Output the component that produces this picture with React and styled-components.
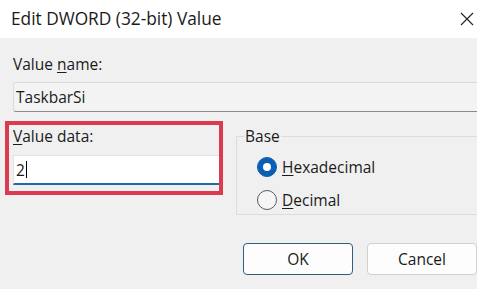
import React from "react";
import styled, { createGlobalStyle } from "styled-components";

const Global = createGlobalStyle`
  html, body { margin: 0; padding: 0; }
  body {
    width: 477px;
    height: 289px;
    overflow: hidden;
    background: #f0f0f0;
    font-family: "Open Sans", "Noto Sans", sans-serif;
    color: #1b1b1b;
  }
  u { text-decoration-thickness: 1px; text-underline-offset: 2px; }
`;

const Window = styled.div`
  width: 477px;
  height: 289px;
  display: flex;
  flex-direction: column;
  overflow: hidden;
`;

const TitleBar = styled.div`
  height: 38px;
  flex: none;
  background: #ffffff;
  display: flex;
  align-items: center;
  justify-content: space-between;
  padding: 0 0 0 11px;
  box-sizing: border-box;
`;

const Title = styled.div`
  font-size: 17.3px;
  color: #1a1a1a;
  padding-bottom: 1px;
`;

const CloseBtn = styled.div`
  width: 20px;
  height: 20px;
  display: flex;
  align-items: center;
  justify-content: center;
`;

const Body = styled.div`
  flex: 1;
  background: #f0f0f0;
  padding: 16px 0 0 13px;
  display: flex;
  flex-direction: column;
`;

const Label = styled.div`
  font-size: 15.5px;
  line-height: 20px;
  height: 20px;
  white-space: nowrap;
`;

const NameBox = styled.div`
  margin-top: 8px;
  height: 30px;
  width: 480px;
  box-sizing: border-box;
  border: 1px solid #dadada;
  border-bottom-color: #8b8b8b;
  background: #f3f3f3;
  border-radius: 3px 0 0 3px;
  display: flex;
  align-items: center;
  padding-left: 2px;
  font-size: 15.5px;
`;

const Row = styled.div`
  margin-top: 9px;
  margin-left: -8px;
  display: flex;
  align-items: flex-start;
`;

const Highlight = styled.div`
  flex: none;
  width: 218px;
  height: 74px;
  box-sizing: border-box;
  border: 4px solid #dc3a4f;
  padding: 1px 0 0 4px;
  display: flex;
  flex-direction: column;
`;

const DataBox = styled.div`
  margin-top: 9px;
  height: 30px;
  box-sizing: border-box;
  background: #ffffff;
  border: 1px solid #e2e2e2;
  border-bottom: 2px solid #1f6aa8;
  border-right: none;
  display: flex;
  align-items: center;
  padding-left: 2px;
  font-size: 15.5px;
`;

const Caret = styled.span`
  display: inline-block;
  width: 1px;
  height: 17px;
  background: #000;
  margin-left: 1px;
`;

const Group = styled.fieldset`
  flex: none;
  margin: 5px 0 0 13px;
  padding: 0 0 0 20px;
  width: 260px;
  height: 89px;
  box-sizing: border-box;
  border: 1px solid #dcdcdc;
  border-right: none;
  border-radius: 0;
  display: flex;
  flex-direction: column;
  gap: 13px;
`;

const Legend = styled.legend`
  font-size: 15.5px;
  padding: 0 1px 0 1px;
  margin-left: -13px;
  line-height: 20px;
`;

const Option = styled.label`
  display: flex;
  align-items: center;
  gap: 5px;
  font-size: 15.5px;
  height: 20px;
  &:first-of-type { margin-top: 11px; }
`;

const Radio = styled.span`
  width: 20px;
  height: 20px;
  box-sizing: border-box;
  border-radius: 50%;
  flex: none;
  display: flex;
  align-items: center;
  justify-content: center;
  background: ${(p) => (p.checked ? "#0a5fb4" : "#f6f6f6")};
  border: 1px solid ${(p) => (p.checked ? "#0a5fb4" : "#5c5c5c")};
  &::after {
    content: "";
    display: ${(p) => (p.checked ? "block" : "none")};
    width: 8px;
    height: 8px;
    border-radius: 50%;
    background: #fff;
  }
`;

const Buttons = styled.div`
  margin-top: 28px;
  margin-left: 230px;
  display: flex;
  gap: 14px;
`;

const Button = styled.div`
  width: 110px;
  height: 32px;
  flex: none;
  box-sizing: border-box;
  border-radius: 4px;
  border: 1px solid ${(p) => (p.primary ? "#2d5f80" : "#cfcfcf")};
  background: #fdfdfd;
  display: flex;
  align-items: center;
  justify-content: center;
  font-size: 15.5px;
  color: #1a1a1a;
`;

export default function App() {
  return (
    <Window>
      <Global />
      <TitleBar>
        <Title>Edit DWORD (32-bit) Value</Title>
        <CloseBtn>
          <svg width="14" height="14" viewBox="0 0 14 14">
            <path d="M1 1 L13 13 M13 1 L1 13" stroke="#222" strokeWidth="1.1" fill="none" />
          </svg>
        </CloseBtn>
      </TitleBar>
      <Body>
        <Label>
          Value <u>n</u>ame:
        </Label>
        <NameBox>TaskbarSi</NameBox>
        <Row>
          <Highlight>
            <Label>
              <u>V</u>alue data:
            </Label>
            <DataBox>
              2<Caret />
            </DataBox>
          </Highlight>
          <Group>
            <Legend>Base</Legend>
            <Option>
              <Radio checked />
              <span>
                <u>H</u>exadecimal
              </span>
            </Option>
            <Option>
              <Radio />
              <span>
                <u>D</u>ecimal
              </span>
            </Option>
          </Group>
        </Row>
        <Buttons>
          <Button primary>OK</Button>
          <Button>Cancel</Button>
        </Buttons>
      </Body>
    </Window>
  );
}
